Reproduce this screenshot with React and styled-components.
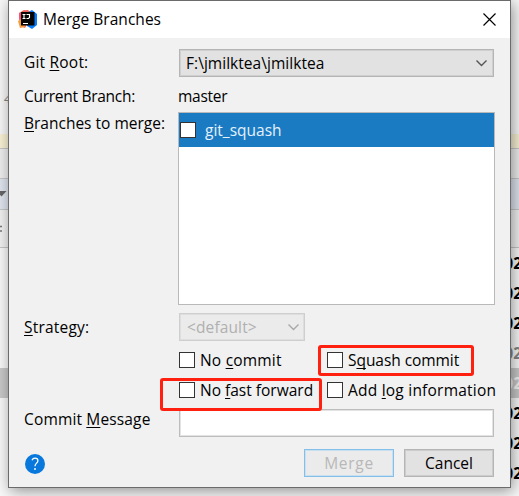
import React from "react";
import styled, { createGlobalStyle } from "styled-components";

const GlobalStyle = createGlobalStyle`
  * { box-sizing: border-box; }
  body {
    margin: 0;
    overflow: hidden;
    font: 15.5px/20px "Open Sans", "Noto Sans", sans-serif;
    color: #000;
  }
`;

const Desktop = styled.div`
  position: relative;
  width: 519px;
  height: 496px;
  overflow: hidden;
  background: #f8f8f8;
`;

const Strip = styled.div`
  display: flex;
  align-items: center;
  justify-content: ${(p) => (p.$end ? "flex-end" : "flex-start")};
  height: ${(p) => p.$h}px;
  background: ${(p) => p.$bg || "transparent"};
  border-bottom: ${(p) => (p.$line ? "1px solid #c6c6c6" : "0")};
  color: ${(p) => p.$color || "#000"};
`;

const LineNumber = styled.span`
  margin: 61px 0 0 4px;
  font-size: 13px;
  font-style: italic;
  color: #888;
`;

const DateCell = styled.span`
  margin: 0 -3px 1px 0;
  font: bold 15.5px/20px "Open Sans", sans-serif;
`;

const Dialog = styled.section`
  position: absolute;
  left: 8px;
  top: 0;
  display: flex;
  flex-direction: column;
  width: 503px;
  height: 488px;
  border: 1px solid #6b6b6b;
  background: #f1f1f1;
  box-shadow: 2px 3px 14px rgba(0, 0, 0, 0.42);
`;

const TitleBar = styled.header`
  display: flex;
  align-items: center;
  height: 37px;
  padding: 0 14px 1px 9px;
  background: #fff;
`;

const Title = styled.h1`
  flex: 1;
  margin: 0 0 0 5px;
  font: inherit;
  letter-spacing: 0.03px;
`;

const Form = styled.div`
  display: flex;
  flex-direction: column;
  padding: 11px 16px 0 15px;
`;

const Row = styled.div`
  display: flex;
  align-items: ${(p) => p.$align || "center"};
  height: ${(p) => p.$h}px;
  margin-top: ${(p) => p.$gap || 0}px;
`;

const Label = styled.label`
  flex: none;
  width: 155px;
  padding-top: ${(p) => p.$top || 0}px;
  padding-bottom: ${(p) => p.$bottom || 0}px;
`;

const Value = styled.output`
  margin-left: -1px;
  padding-bottom: 1px;
`;

const Text = styled.span`
  letter-spacing: ${(p) => p.$ls || 0}px;
  white-space: nowrap;

  u {
    text-decoration-thickness: 1px;
    text-underline-offset: 2px;
    text-decoration-skip-ink: none;
  }
`;

const Select = styled.div`
  display: flex;
  align-items: center;
  justify-content: space-between;
  width: ${(p) => p.$w}px;
  height: 28px;
  padding: 0 ${(p) => (p.$disabled ? 4 : 5)}px 0 ${(p) => (p.$disabled ? 7 : 6)}px;
  border: 1px solid ${(p) => (p.$disabled ? "#cfcfcf" : "#b5b5b5")};
  box-shadow: inset 0 0 0 1px ${(p) => (p.$disabled ? "#dedede" : "#cfcfcf")};
  background: ${(p) => (p.$disabled ? "#ebebeb" : "#e2e2e2")};
  color: ${(p) => (p.$disabled ? "#b0b0b0" : "#000")};
`;

const BranchList = styled.div`
  width: 317px;
  height: 193px;
  flex: none;
  margin-left: -1px;
  border: 1px solid #b9b9b9;
  background: #fff;
`;

const BranchItem = styled.div`
  display: flex;
  align-items: center;
  gap: 9px;
  height: 34px;
  padding-left: 1px;
  background: #1a7bc3;
  color: #e6f1f9;
`;

const Box = styled.span`
  flex: none;
  width: 16px;
  height: 16px;
  border: 1px solid #333;
  background: #fff;
`;

const Option = styled.div`
  display: flex;
  flex: none;
  align-items: center;
  gap: 5px;
  width: ${(p) => (p.$w ? `${p.$w}px` : "auto")};
`;

const Field = styled.input`
  width: 315px;
  height: 28px;
  border: 1px solid #bdbdbd;
  box-shadow: inset 0 0 0 1px #e3e3e3;
  background: #fff;
  outline: none;
`;

const Help = styled.span`
  display: flex;
  align-items: center;
  justify-content: center;
  width: 20px;
  height: 20px;
  margin: 2px auto 0 1px;
  border-radius: 50%;
  background: #0878dc;
`;

const Button = styled.button`
  width: 90px;
  height: 28px;
  margin-left: 10px;
  padding: 0 0 1px;
  font: inherit;
  border: 1px solid ${(p) => (p.$primary ? "#84bfe9" : "#b5b5b5")};
  box-shadow: inset 0 0 0 1px ${(p) => (p.$primary ? "#c9e0f1" : "#cccccc")};
  background: ${(p) => (p.$primary ? "#ebebeb" : "#e2e2e2")};
  color: ${(p) => (p.$primary ? "#b8b8b8" : "#000")};
`;

const Highlight = styled.div`
  position: absolute;
  left: ${(p) => p.$x}px;
  top: ${(p) => p.$y}px;
  width: ${(p) => p.$w}px;
  height: ${(p) => p.$h}px;
  border: 3px solid #ff2010;
  border-radius: 3px;
`;

const IdeaLogo = () => (
  <svg width="20" height="20" viewBox="0 0 20 20">
    <path d="M1 4 6 1l8 2-3 9-4 7-5-2z" fill="#f4685c" />
    <path d="M1 4l4-1 1 7-4 3-1-4z" fill="#ff4d76" />
    <path d="M0 12l5-3 2 9-5 1z" fill="#f99a3c" />
    <path d="M10 3l4-2 5 4v11l-5 4-5-3z" fill="#087cfa" />
    <path d="M4 2l6-1 3 3H4z" fill="#f0605f" />
    <rect x="3" y="3" width="13.5" height="13.5" fill="#050505" />
    <path
      d="M4.5 5.5h3M4.5 9.5h3M6 5.5v4M8.5 5.5h3v3l-1 1H8.5M5 14.5h5"
      fill="none"
      stroke="#fff"
      strokeWidth="1.1"
    />
  </svg>
);

const CloseIcon = () => (
  <svg width="13" height="13" viewBox="0 0 13 13">
    <path d="M.5.5l12 12M12.5.5l-12 12" stroke="#000" strokeWidth="1.15" />
  </svg>
);

const Chevron = ({ color }) => (
  <svg width="13" height="8" viewBox="0 0 13 8">
    <path d="M1.5 1.5l5 5 5-5" fill="none" stroke={color} strokeWidth="1.4" />
  </svg>
);

const QuestionIcon = () => (
  <svg width="10" height="14" viewBox="0 0 10 14">
    <path
      d="M2 3.2C2.6 1.8 3.6 1.2 5 1.2c1.7 0 2.9.9 2.9 2.5C7.9 6.1 5 6.2 5 9.3"
      fill="none"
      stroke="#fff"
      strokeWidth="1.3"
    />
    <circle cx="5" cy="12" r="0.95" fill="#fff" />
  </svg>
);

const SortArrow = () => (
  <svg width="8" height="6" viewBox="0 0 8 6">
    <path d="M-3 0h9.5L1.5 5.5z" fill="#666" />
  </svg>
);

const Handle = () => (
  <svg width="3" height="8" viewBox="0 0 3 8">
    <path d="M0 1.5h2M0 6h2" stroke="#777" strokeWidth="1.5" />
  </svg>
);

const commits = [
  {},
  {},
  {},
  { color: "#858585" },
  { color: "#f4f4f4", bg: "#c8c8c8" },
  {},
  {},
  {},
];

const Backdrop = () => (
  <>
    <Strip $h={134} $bg="#f7f7f7">
      <LineNumber>4</LineNumber>
    </Strip>
    <Strip $h={15} $bg="#f8f1d5" $line />
    <Strip $h={30} $bg="#eeeeee" $line />
    <Strip $h={31} $bg="#dfe4ee" $line>
      <SortArrow />
    </Strip>
    <Strip $h={38} $bg="#f1f1f1" $line>
      <Handle />
    </Strip>
    {commits.map((c, i) => (
      <Strip key={i} $h={30} $bg={c.bg} $color={c.color} $end>
        <DateCell>02</DateCell>
      </Strip>
    ))}
  </>
);

export default function App() {
  return (
    <Desktop>
      <GlobalStyle />
      <Backdrop />
      <Dialog>
        <TitleBar>
          <IdeaLogo />
          <Title>Merge Branches</Title>
          <CloseIcon />
        </TitleBar>
        <Form>
          <Row $h={28}>
            <Label $bottom={2}>
              <Text $ls={0.2}>Git <u>R</u>oot:</Text>
            </Label>
            <Select $w={315}>
              <Text $ls={0.04}>F:\jmilktea\jmilktea</Text>
              <Chevron color="#555" />
            </Select>
          </Row>
          <Row $h={22} $gap={8}>
            <Label $bottom={1}>
              <Text $ls={-0.28}>Current Branch:</Text>
            </Label>
            <Value>
              <Text $ls={-0.25}>master</Text>
            </Value>
          </Row>
          <Row $h={193} $gap={5} $align="flex-start">
            <Label $top={1}>
              <Text><u>B</u>ranches to merge:</Text>
            </Label>
            <BranchList>
              <BranchItem>
                <Box />
                <Text>git_squash</Text>
              </BranchItem>
            </BranchList>
          </Row>
          <Row $h={28} $gap={8}>
            <Label>
              <Text $ls={0.2}><u>S</u>trategy:</Text>
            </Label>
            <Select $w={126} $disabled>
              <Text $ls={0.12}>&lt;default&gt;</Text>
              <Chevron color="#a8a8a8" />
            </Select>
          </Row>
          <Row $h={30} $gap={4}>
            <Label />
            <Option $w={148}>
              <Box />
              <Text $ls={0.2}>No <u>c</u>ommit</Text>
            </Option>
            <Option>
              <Box />
              <Text $ls={-0.06}>S<u>q</u>uash commit</Text>
            </Option>
          </Row>
          <Row $h={30}>
            <Label />
            <Option $w={148}>
              <Box />
              <Text>No <u>f</u>ast forward</Text>
            </Option>
            <Option>
              <Box />
              <Text $ls={0.22}>Add <u>l</u>og information</Text>
            </Option>
          </Row>
          <Row $h={28} $gap={4}>
            <Label $bottom={9}>
              <Text $ls={0.15}>Commit <u>M</u>essage</Text>
            </Label>
            <Field />
          </Row>
          <Row $h={28} $gap={12}>
            <Help>
              <QuestionIcon />
            </Help>
            <Button $primary>
              <Text $ls={0.7}>Merge</Text>
            </Button>
            <Button>
              <Text>Cancel</Text>
            </Button>
          </Row>
        </Form>
      </Dialog>
      <Highlight $x={318} $y={345} $w={156} $h={31} />
      <Highlight $x={160} $y={378} $w={162} $h={33} />
    </Desktop>
  );
}
